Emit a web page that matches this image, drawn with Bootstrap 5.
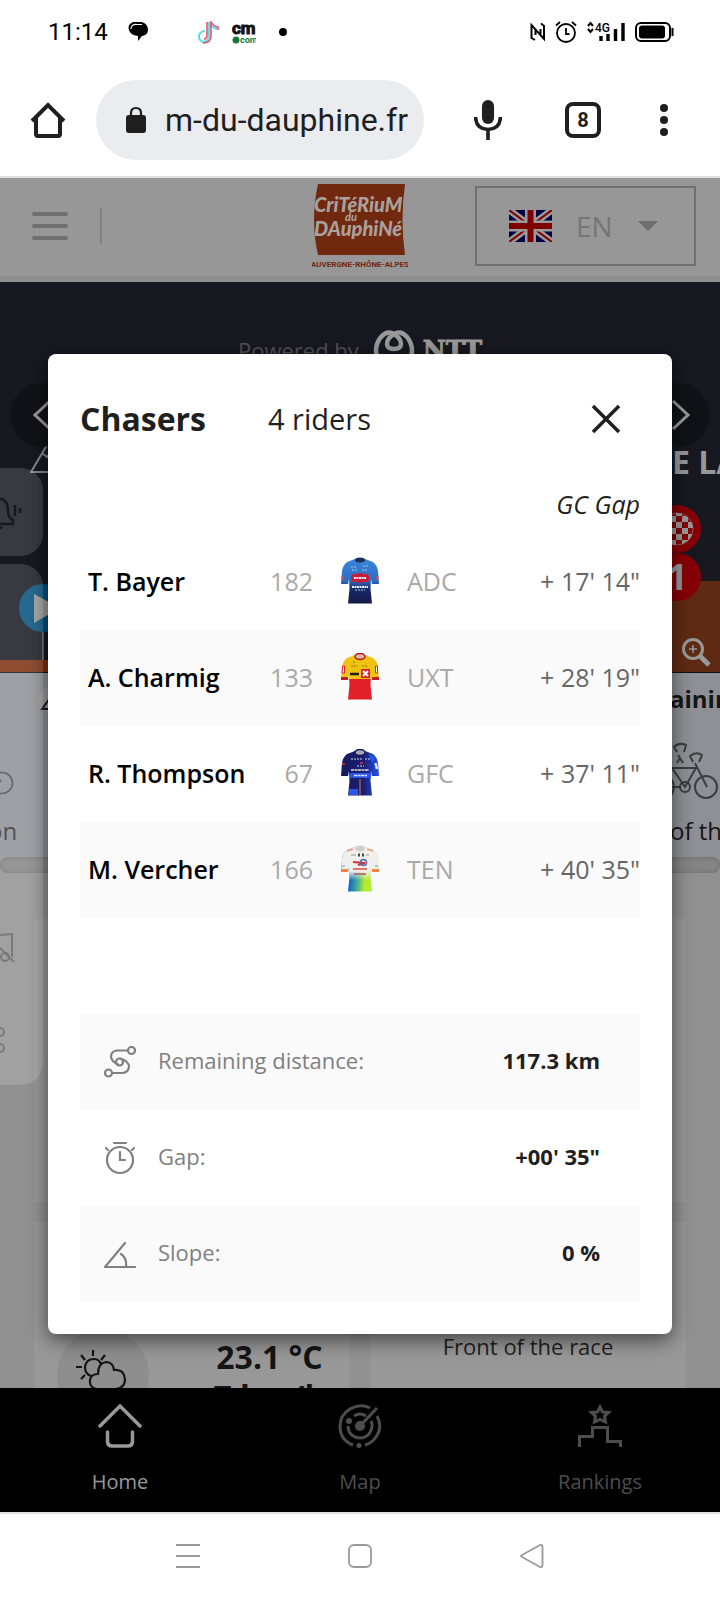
<!DOCTYPE html>
<html lang="en">
<head>
<meta charset="utf-8">
<meta name="viewport" content="width=device-width, initial-scale=1">
<title>Chasers</title>
<link href="https://cdn.jsdelivr.net/npm/bootstrap@5.3.0/dist/css/bootstrap.min.css" rel="stylesheet">
<style>
body { font-family: "Open Sans", "Noto Sans", sans-serif; font-size: 24px; line-height: 32px; color: #1f1f1f; background: #fff; height: 100vh; }
svg { display: block; flex: none; }
button { border: 0; background: none; padding: 0; color: inherit; }
.ui-font { font-family: Roboto, sans-serif; }

/* phone status bar and browser bar */
.status-row { height: 64px; padding: 0 44px 0 48px; color: #000; }
.status-apps { gap: 12px; margin-left: 48px; }
.app-cm { font: 700 17px "Liberation Sans Narrow", Roboto, sans-serif; }
.app-com { font: 700 9px "Liberation Sans Narrow", Roboto, sans-serif; }
.browser-row { height: 112px; padding: 0 52px 0 28px; }
.url-pill { background: #ebecf0; height: 80px; width: 328px; border-radius: 40px; margin-left: 28px; padding: 0 16px 0 28px; }
.url-pill input { border: 0; background: none; outline: 0; width: 244px; padding: 0; font-size: 32px; line-height: 40px; color: #1f1f1f; text-align: right; }
.browser-tools { gap: 59px; }
.tab-count { width: 36px; height: 36px; border: 4px solid #1f1f1f; border-radius: 8px; font-size: 20px; line-height: 28px; font-weight: 700; }
.hairline { border-top: 2px solid #dfdfdf; }

/* dimmed site */
.site { min-height: 0; background: #919191; }
.site-header { height: 104px; background: #979797; border-bottom: 6px solid #8f8f8f; padding: 0 24px 2px 32px; }
.menu-sep { width: 2px; height: 36px; background: #808080; margin-left: 32px; }
.logo-title { font: italic 900 20px Lato, sans-serif; }
.logo-du { font: italic 900 11px Lato, sans-serif; }
.logo-region { font: 700 8px "Liberation Sans Narrow", Roboto, sans-serif; }
.lang-box { width: 221px; height: 80px; border: 2px solid #707070; padding: 0 36px 0 32px; }
.lang-box select { appearance: none; border: 0; background: none; outline: 0; padding: 0; width: 48px; font-size: 28px; line-height: 36px; color: #757575; }
.hero { height: 390px; background: #171820; padding-top: 48px; }
.powered { color: #4f4f53; height: 40px; font-size: 22px; }
.ntt { font-family: "DejaVu Serif", serif; font-weight: 700; font-size: 25px; color: #999; -webkit-text-stroke: 1px #999; }
.stage-line { margin-top: 74px; padding-left: 30px; height: 44px; }
.stage-name { font-size: 32px; font-weight: 700; color: #989898; width: 48px; line-height: 36px; }
.round-btn { width: 64px; height: 64px; top: 101px; background: #111217; border-radius: 50%; }
.round-btn.go-prev { left: 10px; }
.round-btn.go-next { right: 10px; }
.profile-area { left: 0; right: 0; bottom: 0; }
.pins-left { left: 18px; bottom: 12px; }
.pins-right { right: 8px; bottom: 0; }
.drawer-bit { left: 0; width: 43px; background: rgba(255,255,255,.15); }
.drawer-alert { top: 290px; height: 88px; border-radius: 0 22px 22px 0; }
.drawer-main { top: 386px; height: 521px; border-radius: 0 22px 22px 0; padding-top: 368px; }
.info-strip { height: 185px; background: #8f9096; border-top: 1px solid #111; color: #151515; }
.info-left { width: 64px; }
.info-left div { margin: -4px 0 0 -12px; color: #333; }
.info-right { width: 50px; padding-top: 10px; }
.info-right svg { margin: 24px 0 16px; }
.scroll-track { height: 16px; border-radius: 8px; background: #858585; box-shadow: inset 0 0 5px #6b6b6b; }
.tiles { padding: 46px 34px 0; display: grid; grid-template-columns: 316px 1fr; gap: 20px; }
.tile { background: #989898; }
.tile-wide { grid-column: 1 / 3; height: 283px; }
.tile-low { height: 260px; }
.tile-weather { padding: 107px 16px 0 23px; gap: 56px; }
.tile-race { padding-top: 108px; font-size: 22px; }
.weather-disc { width: 92px; height: 92px; border-radius: 50%; background: #8e8e8e; }
.reading { font-size: 32px; line-height: 40px; font-weight: 700; color: #151515; padding-top: 8px; }

/* riders dialog */
.riders-box { top: 176px; left: 48px; right: 48px; padding: 32px; background: #fff; border-radius: 8px; box-shadow: 0 6px 20px rgba(0,0,0,.55); }
.box-head { height: 68px; padding-bottom: 2px; }
.box-head h1 { font-size: 32px; line-height: 40px; font-weight: 700; width: 188px; }
.box-head p { font-size: 29px; line-height: 40px; }
.riders { table-layout: fixed; color: #000; font-size: 25px; }
.riders thead th { height: 80px; padding: 20px 0 0; font-weight: 400; font-style: italic; color: #1f1f1f; }
.riders tbody tr { height: 96px; }
.riders td, .riders tbody th { padding: 0 0 2px; vertical-align: middle; }
.riders tbody th { font-weight: 600; padding-left: 8px; }
.riders tbody tr:nth-child(even), .facts > div:nth-child(odd) { background: #fafafa; }
.col-name { width: 168px; } .col-bib { width: 65px; } .col-shirt { width: 94px; } .col-team { width: 90px; }
.dim { color: #a9a9a9; } .mid { color: #666; }
.facts { margin-top: 96px; font-size: 22px; }
.facts > div { height: 96px; padding: 0 40px 0 24px; }
.facts dt { font-weight: 400; color: #808080; margin-left: 22px; padding-bottom: 4px; }
.facts dd { font-weight: 700; margin: 0; color: #1f1f1f; padding-bottom: 4px; }

/* tab bar and system bar */
.tab-bar { height: 124px; background: #000; }
.tab-bar a { color: #4d4d4d; font-size: 20px; line-height: 28px; padding-top: 16px; gap: 20px; }
.tab-bar a.active { color: #999; }
.system-row { height: 88px; gap: 148px; padding-bottom: 2px; }
</style>
</head>
<body class="d-flex flex-column overflow-hidden">

<svg width="0" height="0" class="position-absolute" aria-hidden="true">
  <defs>
    <linearGradient id="adc" x2="0" y2="1"><stop offset="0" stop-color="#3d86d8"/><stop offset=".5" stop-color="#2c6ec4"/><stop offset=".68" stop-color="#182a68"/><stop offset="1" stop-color="#141a4a"/></linearGradient>
    <linearGradient id="uxt" x2="0" y2="1"><stop offset=".54" stop-color="#f0c212"/><stop offset=".54" stop-color="#e2202a"/></linearGradient>
    <linearGradient id="gfc"><stop offset=".1" stop-color="#171b60"/><stop offset=".6" stop-color="#1a2070"/><stop offset="1" stop-color="#2350ee"/></linearGradient>
    <linearGradient id="ten" x2="1" y2=".1"><stop offset=".3" stop-color="#1266c8"/><stop offset=".52" stop-color="#45b48c"/><stop offset=".7" stop-color="#b6ea2c"/></linearGradient>
    <linearGradient id="fade" x2="0" y2="1"><stop offset=".55" stop-color="#f1efec"/><stop offset=".75" stop-color="#f1efec" stop-opacity="0"/></linearGradient>
    <linearGradient id="ground"><stop offset="0" stop-color="#7d300f"/><stop offset="1" stop-color="#5e2a13"/></linearGradient>
    <path id="shirt" d="M15 2Q20 0 25 2L33 5Q37 8 38 14L39 27H32L31 22L30.500 32L32 46.500H8L9.500 32L9 22L8 27H1L2 14Q3 8 7 5Z"/>
  </defs>
</svg>

<header class="ui-font flex-shrink-0">
  <div class="status-row d-flex align-items-center">
    <span>11:14</span>
    <svg style="margin-left:20px" width="20" height="20" viewBox="0 0 20 20"><path d="M5 0H14Q20 2 20 8Q20 13 14 14L10 19V14Q2 13 1 8Q-1 3 5 0Z"/><path d="M3 7Q3 2 9 2.500H14" fill="none" stroke="#fff" stroke-width="1.200"/></svg>
    <div class="status-apps d-flex align-items-center">
      <svg width="24" height="24" viewBox="0 0 24 24" fill="none" stroke-width="2.200"><path d="M13 2V17Q12 22 7 22Q2 20 3 15Q5 11 9 11M13 2Q15 8 21 9" stroke="#68dce3"/><path d="M15 1V16Q15 23 7 23M8 19Q11 19 11 15V2M16 3Q18 7 22 7V10" stroke="#e8476a" stroke-width="1.500"/></svg>
      <svg width="24" height="26" viewBox="0 0 24 26"><text class="app-cm" x="0" y="15" fill="#111" stroke="#111">cm</text><circle cx="4" cy="21" r="3.500" fill="#157a3c"/><text class="app-com" x="8" y="24" fill="#157a3c">com</text></svg>
      <svg class="ms-2" width="12" height="8"><circle cx="7" cy="4" r="4"/></svg>
    </div>
    <svg class="ms-auto" width="16" height="20" viewBox="0 0 16 20" fill="none" stroke="#000" stroke-width="2"><path d="M5 18L1.500 16V3L14 17V4L11 1.500M5.500 13V8M10.500 7V12"/></svg>
    <svg class="ms-2 me-2" width="24" height="24" viewBox="0 0 24 24" fill="none" stroke="#000" stroke-width="1.800"><circle cx="12" cy="13" r="9"/><path d="M12 8V14H15.500M2 5.500L6 2M18 2L22 5.500"/></svg>
    <svg width="40" height="24" viewBox="0 0 40 24"><path d="M2 6L4.500 3L7 6M2 9L4.500 12L7 9" fill="none" stroke="#000" stroke-width="2"/><text x="9" y="12" font-family="Roboto" font-weight="500" font-size="12">4G</text><path d="M15 16V21M22 14V21M29.500 9V21M37 3V21" stroke="#000" stroke-width="3.400"/></svg>
    <svg class="ms-2" width="42" height="22" viewBox="0 0 42 22"><rect x="2" y="2" width="34" height="18" rx="5" fill="none" stroke="#000" stroke-width="2"/><rect x="5" y="4.500" width="26" height="13" rx="3"/><path d="M38.500 7V15" stroke="#000" stroke-width="2"/></svg>
  </div>
  <div class="browser-row d-flex align-items-center">
    <button aria-label="Home page"><svg width="40" height="40" viewBox="0 0 40 40" fill="none" stroke="#1f1f1f" stroke-width="4"><path d="M4 21L20 5L36 21M8 18V34Q8 36 10 36H30Q32 36 32 34V18"/></svg></button>
    <div class="url-pill d-flex align-items-center justify-content-between">
      <svg width="24" height="28" viewBox="0 0 24 28"><rect x="2" y="9" width="20" height="18" rx="3" fill="#1f1f1f"/><path d="M7 10V7Q7 2 12 2Q17 2 17 7V10" fill="none" stroke="#1f1f1f" stroke-width="2.200"/></svg>
      <input type="text" aria-label="Address" value="m-du-dauphine.fr">
    </div>
    <div class="browser-tools d-flex align-items-center ms-auto">
      <button class="me-1" aria-label="Voice search"><svg width="28" height="40" viewBox="0 0 28 40"><rect x="8" y="0" width="12" height="24" rx="6" fill="#1f1f1f"/><path d="M1.500 17Q2 29 14 29.500Q26 29 26.500 17M14 29V40" fill="none" stroke="#1f1f1f" stroke-width="3.600"/></svg></button>
      <button class="tab-count text-center">8</button>
      <button aria-label="More"><svg width="8" height="32" viewBox="0 0 8 32"><g fill="#1f1f1f"><circle cx="4" cy="4" r="4"/><circle cx="4" cy="16" r="4"/><circle cx="4" cy="28" r="4"/></g></svg></button>
    </div>
  </div>
</header>

<main class="site hairline flex-grow-1 position-relative overflow-hidden">
  <div class="site-header d-flex align-items-center justify-content-between position-relative">
    <div class="d-flex align-items-center">
      <button aria-label="Menu"><svg width="36" height="28" viewBox="0 0 36 28" stroke="#6f6f6f" stroke-width="4" stroke-linecap="round"><path d="M2 2H34M2 14H34M2 26H34"/></svg></button>
      <div class="menu-sep"></div>
    </div>
    <a href="#" class="position-absolute top-0 start-50 translate-middle-x pt-1" aria-label="Critérium du Dauphiné">
      <svg width="96" height="88" viewBox="0 0 96 88"><path d="M6 2H93Q88 38 93 73H6Q-2 38 6 2Z" fill="#70290f"/><g fill="#aaa09c"><text class="logo-title" x="2" y="30">CriTéRiuM</text><text class="logo-du" x="33" y="39">du</text><text class="logo-title" x="2" y="54">DAuphiNé</text></g><text class="logo-region" x="48" y="85" text-anchor="middle" fill="#70290f">AUVERGNE-RHÔNE-ALPES</text></svg>
    </a>
    <label class="lang-box d-flex align-items-center">
      <svg width="43" height="32" viewBox="0 0 43 32"><rect width="43" height="32" fill="#000042"/><path d="M0 0L43 32M43 0L0 32" stroke="#999" stroke-width="7"/><path d="M0 0L43 32M43 0L0 32" stroke="#800000" stroke-width="2"/><path d="M21.500 0V32M0 16H43" stroke="#999" stroke-width="11"/><path d="M21.500 0V32M0 16H43" stroke="#7e0000" stroke-width="6"/></svg>
      <select class="ms-4" aria-label="Language"><option>EN</option></select>
      <svg class="ms-auto" width="20" height="10"><path d="M0 0H20L10 10Z" fill="#6f6f6f"/></svg>
    </label>
  </div>

  <section class="hero position-relative">
    <div class="powered d-flex align-items-center justify-content-center">
      <span>Powered by</span>
      <svg style="margin-left:14px" width="42" height="42" viewBox="0 0 42 42" fill="none" stroke="#999" stroke-width="4.500"><path d="M21 5Q28 9 28 15Q28 20 21 20Q14 20 14 15Q14 9 21 5Q28 1 34 8Q39 14 39 22Q38 39 21 39Q4 39 3 22Q3 14 8 8Q14 1 21 5Z"/></svg>
      <span class="ntt ms-2">NTT</span>
    </div>
    <div class="profile-area position-absolute"><svg width="100%" height="91" viewBox="0 0 720 91" preserveAspectRatio="none"><path d="M0 79H60L300 50L620 0H720V91H0Z" fill="url(#ground)"/></svg></div>
    <button class="round-btn go-prev position-absolute" aria-label="Previous stage"><svg width="64" height="64" fill="none" stroke="#999" stroke-width="3"><path d="M40 18L25 32L40 46"/></svg></button>
    <button class="round-btn go-next position-absolute" aria-label="Next stage"><svg width="64" height="64" fill="none" stroke="#999" stroke-width="3"><path d="M27 18L42 32L27 46"/></svg></button>
    <div class="stage-line d-flex justify-content-between">
      <svg width="40" height="30" viewBox="0 0 40 30" fill="none" stroke="#888" stroke-width="2"><path d="M1 28L17 1H22L38 28ZM12 9L17 13L20 9"/></svg>
      <span class="stage-name position-relative text-nowrap overflow-hidden">E LA</span>
    </div>
    <svg class="pins-left position-absolute" width="50" height="76" viewBox="0 0 50 76"><path d="M25 24V76" stroke="#777" stroke-width="1.500"/><circle cx="25" cy="24" r="24" fill="#00507e"/><path d="M16 10L42 24L16 39Z" fill="#999"/></svg>
    <svg class="pins-right position-absolute" width="60" height="168" viewBox="0 0 60 168">
      <defs><pattern id="chk" width="12" height="12" patternUnits="userSpaceOnUse"><rect width="12" height="12" fill="#999"/><path d="M0 0H6V6H0ZM6 6H12V12H6Z" fill="#860006"/></pattern></defs>
      <circle cx="25" cy="25" r="24" fill="#860006"/><circle cx="25" cy="25" r="16" fill="url(#chk)" stroke="#999" stroke-width=".6"/><circle cx="25" cy="73" r="24" fill="#860006"/><text x="15" y="86" font-family="Open Sans" font-weight="700" font-size="36" fill="#999">1</text>
      <g fill="none" stroke="#999"><circle cx="41" cy="145" r="9.500" stroke-width="3"/><path d="M41 141V149M37 145H45" stroke-width="1.500"/><path d="M47 151L57 161" stroke-width="5"/></g>
    </svg>
  </section>

  <section class="info-strip d-flex justify-content-between">
    <div class="info-left">
      <svg width="64" height="146" viewBox="0 0 64 146" fill="none"><circle cx="51" cy="27" r="13" fill="#999"/><path d="M42 36L50 25V36Z" stroke="#151515" stroke-width="2"/><g stroke="#4d4e50" stroke-width="1.600"><circle cx="2" cy="110" r="10.500"/><path d="M-2 104L1 109"/></g></svg>
      <div>on</div>
    </div>
    <div class="info-right text-nowrap overflow-hidden">
      <div class="fw-bold">aining</div>
      <svg width="60" height="60" viewBox="0 0 60 60" fill="none" stroke="#3c3d40" stroke-width="2"><circle cx="36" cy="48" r="11"/><circle cx="15" cy="48" r="5"/><path d="M-3 29H26L15 48L2 29M25 24L37 48M-3 48H10M2 41Q6 49 1 57M7 13L4 8Q9 3 16 6L14 13M23 23L20 17Q26 12 32 16L29 23M8 16L13 24M10 19L7 24"/></svg>
      <div>of the</div>
    </div>
  </section>
  <div class="scroll-track"></div>
  <section class="tiles">
    <div class="tile tile-wide"></div>
    <div class="tile tile-low tile-weather d-flex align-items-start">
      <div class="weather-disc flex-shrink-0 d-flex align-items-center justify-content-center">
        <svg width="54" height="50" viewBox="0 0 54 50" fill="none" stroke="#151515" stroke-width="2.200"><path d="M15 26Q9 24 9 17Q10 9 18 9Q23 9 25 14M17 0V6M5 5L9 10M29 5L25 10M0 17H6M5 29L9 25M20 39Q13 37 14 30Q15 24 22 24Q22 13 30 12Q37 12 38 20Q48 19 49 29Q49 38 40 39H20"/></svg>
      </div>
      <div class="flex-grow-1 text-center text-nowrap reading"><div>23.1 °C</div><div>7 km/h</div></div>
    </div>
    <div class="tile tile-low tile-race text-center">Front of the race</div>
  </section>

  <div class="drawer-bit drawer-alert position-absolute"><svg width="40" height="88" viewBox="0 0 40 88" fill="none" stroke="#171820" stroke-width="2.500"><path d="M-4 31Q8 29 8 43Q8 50 13 52V56H-4M-3 59Q0 61 2 59M15 37V48M20 40V45"/></svg></div>
  <div class="drawer-bit drawer-main position-absolute">
    <svg width="20" height="32" viewBox="0 0 20 32" fill="none" stroke="#7a7a7a" stroke-width="2"><path d="M0 3L12 2V25M0 16L14 30"/><circle cx="5" cy="25" r="4"/></svg>
    <svg class="mt-5" width="20" height="50" viewBox="0 0 20 50" fill="none" stroke="#7a7a7a" stroke-width="2"><circle cx="0" cy="20" r="4"/><circle cx="0" cy="36" r="4"/></svg>
  </div>

  <div class="riders-box position-absolute" role="dialog" aria-labelledby="box-title">
    <div class="box-head d-flex align-items-center">
      <h1 id="box-title" class="mb-0">Chasers</h1>
      <p class="mb-0">4 riders</p>
      <button class="ms-auto me-3" aria-label="Close"><svg width="36" height="36" viewBox="0 0 36 36" stroke="#1f1f1f" stroke-width="3.500"><path d="M5 5L31 31M31 5L5 31"/></svg></button>
    </div>
    <table class="riders w-100">
      <colgroup><col class="col-name"><col class="col-bib"><col class="col-shirt"><col class="col-team"><col></colgroup>
      <thead><tr><th colspan="5" class="text-end">GC Gap</th></tr></thead>
      <tbody>
        <tr><th scope="row">T. Bayer</th><td class="text-end dim">182</td>
          <td><svg class="mx-auto" width="40" height="48"><use href="#shirt" fill="url(#adc)"/><ellipse cx="20" cy="3" rx="5" ry="2.500" fill="#17305a"/><rect x="11" y="17" width="18" height="8" rx="2" fill="#c91f36"/><ellipse cx="20" cy="21" rx="6" ry="5" fill="#c91f36"/><path d="M14 21H26M12 30H28" stroke="#e9eefa" stroke-width="2" stroke-dasharray="2 .5"/><path d="M15 33H25M11 10H16M23 9H29M12 13H18M22 13H28" stroke="#a9c8ee" stroke-dasharray="2 1"/><path d="M1.500 21H4M36 21H38.500" stroke="#e04050" stroke-width="3"/></svg></td>
          <td class="dim">ADC</td><td class="text-end mid">+ 17' 14"</td></tr>
        <tr><th scope="row">A. Charmig</th><td class="text-end dim">133</td>
          <td><svg class="mx-auto" width="40" height="48"><use href="#shirt" fill="url(#uxt)"/><ellipse cx="20" cy="3.500" rx="5" ry="3" fill="#dcb9a8" stroke="#b51b22" stroke-width="1.500"/><rect x="21" y="16" width="9" height="9" fill="#df2028"/><path d="M23 18L28 23M28 18L23 23" stroke="#fff" stroke-width="2"/><path d="M10 21H19" stroke="#222" stroke-width="2.500"/><path d="M2.500 13H4.500V20H2ZM35.500 13H37.500V20H35.500Z" fill="#fff" stroke="#df2028"/><path d="M1 25.500H8M32 25.500H39" stroke="#c41c22" stroke-width="3"/><path d="M11 13H18M22 13H28M13 9H15" stroke="#8a7020" stroke-dasharray="2 1"/></svg></td>
          <td class="dim">UXT</td><td class="text-end mid">+ 28' 19"</td></tr>
        <tr><th scope="row">R. Thompson</th><td class="text-end dim">67</td>
          <td><svg class="mx-auto" width="40" height="48"><use href="#shirt" fill="url(#gfc)"/><ellipse cx="20" cy="3.500" rx="5" ry="3" fill="#a9a8b4" stroke="#151a55" stroke-width="1.500"/><path d="M9.500 24H31V29H9.500ZM9 40H18V46H9ZM29 5L35 8L32 14Z" fill="#2857ee"/><path d="M20 30V46" stroke="#e87448"/><path d="M11 10H22M25 10H30M17 17H24" stroke="#d0d6f5" stroke-dasharray="2 1"/><path d="M11 21H29M14 26.500H27" stroke="#dde" stroke-width="1.600" stroke-dasharray="3 .5"/><path d="M35.500 14L37 20" stroke="#dfe6ff" stroke-width="2.500"/><path d="M2 15H5M20 14H23" stroke="#dc3444" stroke-width="1.500"/></svg></td>
          <td class="dim">GFC</td><td class="text-end mid">+ 37' 11"</td></tr>
        <tr><th scope="row">M. Vercher</th><td class="text-end dim">166</td>
          <td><svg class="mx-auto" width="40" height="48"><use href="#shirt" fill="url(#ten)"/><use href="#shirt" fill="url(#fade)"/><path d="M1 24H8V27H1ZM32 24H39V27H32Z" fill="#ef8540"/><ellipse cx="20" cy="3.500" rx="5" ry="3" fill="#cfcfcf"/><path d="M7 6L13 4M27 4L33 6" stroke="#ef9a78" stroke-width="1.500"/><path d="M11 10H16M26 10H29" stroke="#999"/><path d="M19 8.500V11.500M23 8.500V11.500" stroke="#222" stroke-width="1.600"/><path d="M13 17L25 18L18 20" stroke="#e02e2a" stroke-width="2" fill="none"/><circle cx="23.500" cy="17.500" r="3" fill="none" stroke="#4a6bb5" stroke-width="1.600"/><path d="M13 24H27" stroke="#d8473e" stroke-width="1.500"/><path d="M14 29H26" stroke="#a8505a" stroke-width="1.500"/><path d="M2 21H5M35 21H38" stroke="#5a9ad0"/></svg></td>
          <td class="dim">TEN</td><td class="text-end mid">+ 40' 35"</td></tr>
      </tbody>
    </table>
    <dl class="facts mb-0">
      <div class="d-flex align-items-center">
        <svg width="32" height="32" viewBox="0 0 32 32" fill="none" stroke="#808080" stroke-width="2.200"><circle cx="27.500" cy="4.500" r="3.500"/><circle cx="4.500" cy="27" r="3.500"/><circle cx="15.500" cy="16" r="3.500"/><path d="M24 4.500H13Q7 5 7 11Q8 16 15 19M16 12.500Q25 15 25 21Q24 27 18 27H8"/></svg>
        <dt>Remaining distance:</dt><dd class="ms-auto">117.3 km</dd>
      </div>
      <div class="d-flex align-items-center">
        <svg width="32" height="34" viewBox="0 0 32 34" fill="none" stroke="#808080" stroke-width="2.200"><circle cx="16" cy="19" r="13"/><path d="M10 2H22M16 11V19H21M2 7L4 9M30 7L28 9" stroke-linecap="round"/></svg>
        <dt>Gap:</dt><dd class="ms-auto">+00' 35"</dd>
      </div>
      <div class="d-flex align-items-center">
        <svg width="32" height="32" viewBox="0 0 32 32" fill="none" stroke="#808080" stroke-width="2.200" stroke-linecap="round"><path d="M21 5L1 29H31M17 16Q23 20 22 29"/></svg>
        <dt>Slope:</dt><dd class="ms-auto">0 %</dd>
      </div>
    </dl>
  </div>
</main>

<nav class="tab-bar row g-0 text-center flex-shrink-0">
  <a href="#" class="col active d-flex flex-column align-items-center text-decoration-none"><svg width="44" height="44" viewBox="0 0 44 44" fill="none" stroke="currentColor" stroke-width="3.500" stroke-linecap="round"><path d="M2 22L22 2L42 22M9.500 28V38Q10 42 14 42H30Q34 42 34.500 38V28"/></svg><span>Home</span></a>
  <a href="#" class="col d-flex flex-column align-items-center text-decoration-none"><svg width="44" height="44" viewBox="0 0 44 44" fill="none" stroke="currentColor" stroke-width="3"><path d="M32 4Q22-1 12 5Q2 11 2 22Q2 36 15 41M39 12Q45 23 38 33Q34 39 27 41M28 12Q22 8 16 12M10 22Q10 30 17 33Q25 36 31 30Q36 23 33 17M22 22L39 4"/><circle cx="22" cy="22" r="5" fill="currentColor" stroke="none"/><circle cx="11" cy="17" r="3" fill="currentColor" stroke="none"/><circle cx="21" cy="41.500" r="2.500" fill="currentColor" stroke="none"/></svg><span>Map</span></a>
  <a href="#" class="col d-flex flex-column align-items-center text-decoration-none"><svg width="44" height="44" viewBox="0 0 44 44" fill="none" stroke="currentColor" stroke-width="3"><path d="M1.500 43V32.500H14.500V23.500H29.500V37.500H42.500V43M22 3L24.500 8L30.500 8.500L26.500 12L27.500 18L22 15.500L16.500 18L17.500 12L13.500 8.500L19.500 8Z"/></svg><span>Rankings</span></a>
</nav>
<footer class="system-row hairline d-flex align-items-center justify-content-center flex-shrink-0">
  <button aria-label="Recent apps"><svg width="24" height="26" viewBox="0 0 24 26" stroke="#999" stroke-width="2"><path d="M0 2H24M0 13H24M0 24H24"/></svg></button>
  <button aria-label="Home screen"><svg width="24" height="26" viewBox="0 0 24 26" fill="none" stroke="#999" stroke-width="1.800"><rect x="1" y="2" width="22" height="22" rx="5"/></svg></button>
  <button aria-label="Back"><svg width="24" height="26" viewBox="0 0 24 26" fill="none" stroke="#999" stroke-width="1.800"><path d="M2 12L20 2Q22.500 1.500 22.500 4V22Q22.500 24.500 20 24L2 14Q0 13 2 12Z"/></svg></button>
</footer>
<script src="https://cdn.jsdelivr.net/npm/bootstrap@5.3.0/dist/js/bootstrap.bundle.min.js"></script>
</body>
</html>
